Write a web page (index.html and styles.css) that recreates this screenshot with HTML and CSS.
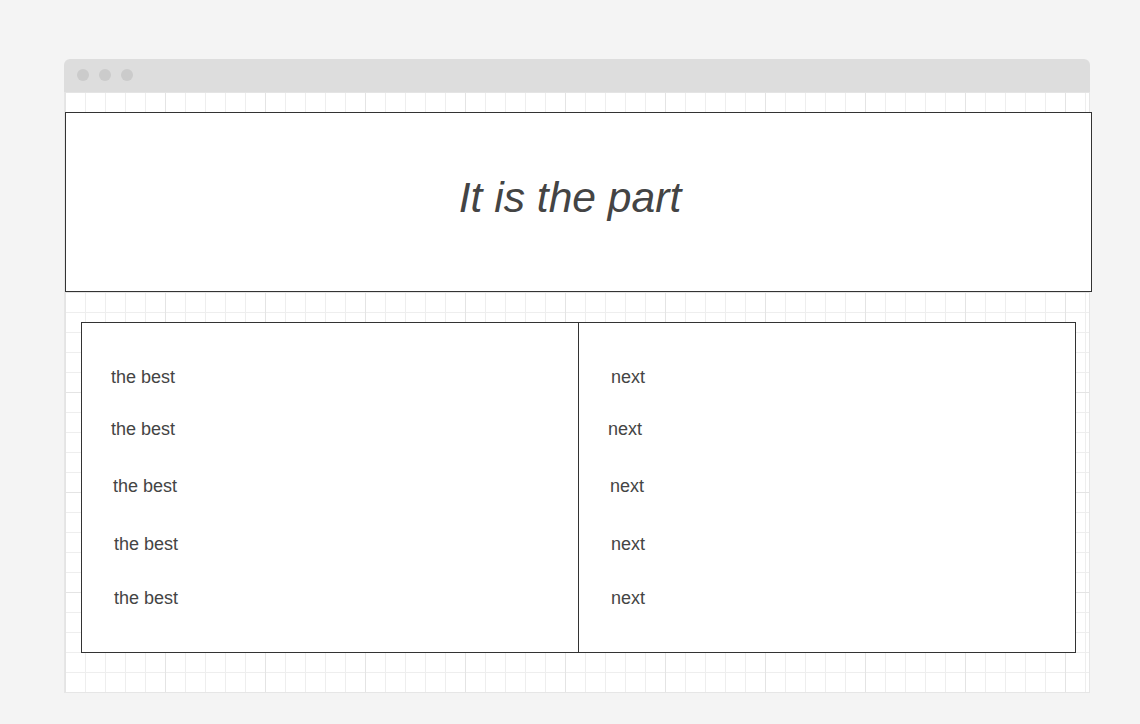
FILE: index.html
```html
<!DOCTYPE html>
<html>
<head>
<meta charset="utf-8">
<link rel="stylesheet" href="styles.css">
</head>
<body>
<div class="window">
  <div class="titlebar">
    <span class="dot"></span><span class="dot"></span><span class="dot"></span>
  </div>
  <div class="canvas">
    <div class="hero"><h1 class="hero-title">It is the part</h1></div>
    <div class="table">
      <div class="col col-left">
        <div class="cell c1">the best</div>
        <div class="cell c2">the best</div>
        <div class="cell c3">the best</div>
        <div class="cell c4">the best</div>
        <div class="cell c5">the best</div>
      </div>
      <div class="col col-right">
        <div class="cell c1">next</div>
        <div class="cell c2">next</div>
        <div class="cell c3">next</div>
        <div class="cell c4">next</div>
        <div class="cell c5">next</div>
      </div>
    </div>
  </div>
</div>
</body>
</html>
```
FILE: styles.css
```css
html, body {
  margin: 0;
  padding: 0;
}
body {
  background: #f4f4f4;
  font-family: "Liberation Sans", Arial, sans-serif;
  color: #444;
  width: 1140px;
  height: 724px;
  overflow: hidden;
}
.window {
  margin: 59px 0 0 64px;
  width: 1026px;
}
.titlebar {
  height: 33px;
  background: #dddddd;
  border-radius: 6px 6px 0 0;
  display: flex;
  align-items: center;
  gap: 10px;
  padding: 0 0 2px 13px;
  box-sizing: border-box;
}
.dot {
  width: 12px;
  height: 12px;
  border-radius: 50%;
  background: #cbcbcb;
}
.canvas {
  height: 601px;
  box-sizing: border-box;
  border: 1px solid #e6e6e6;
  border-top: none;
  background-color: #ffffff;
  background-image:
    linear-gradient(to right, #e4e4e4 1px, transparent 1px),
    linear-gradient(to bottom, #e4e4e4 1px, transparent 1px),
    linear-gradient(to right, #eeeeee 1px, transparent 1px),
    linear-gradient(to bottom, #eeeeee 1px, transparent 1px);
  background-size: 100px 100px, 100px 100px, 20px 20px, 20px 20px;
  background-position: 0 0;
  padding-top: 20px;
}
.hero {
  width: 1027px;
  height: 180px;
  box-sizing: border-box;
  border: 1px solid #333;
  background: #fff;
  display: flex;
  align-items: center;
  justify-content: center;
  padding-right: 17px;
  padding-bottom: 10px;
}
.hero-title {
  margin: 0;
  font-size: 42.6px;
  font-style: italic;
  font-weight: normal;
  color: #444;
  line-height: 50px;
}
.table {
  margin: 30px 0 0 16px;
  width: 995px;
  height: 331px;
  box-sizing: border-box;
  border: 1px solid #333;
  background: #fff;
  display: grid;
  grid-template-columns: 497px 1fr;
}
.col {
  display: flex;
  flex-direction: column;
  padding-top: 44px;
}
.col-left {
  border-right: 1px solid #333;
}
.cell {
  font-size: 18px;
  line-height: 20px;
  height: 20px;
  color: #444;
}
.c1 { padding-left: 29px; margin-bottom: 32px; }
.c2 { padding-left: 29px; margin-bottom: 37px; }
.c3 { padding-left: 31px; margin-bottom: 38px; }
.c4 { padding-left: 32px; margin-bottom: 34px; }
.c5 { padding-left: 32px; }
.col-right .c1 { padding-left: 32px; }
.col-right .c2 { padding-left: 29px; }
.col-right .c3 { padding-left: 31px; }
```
